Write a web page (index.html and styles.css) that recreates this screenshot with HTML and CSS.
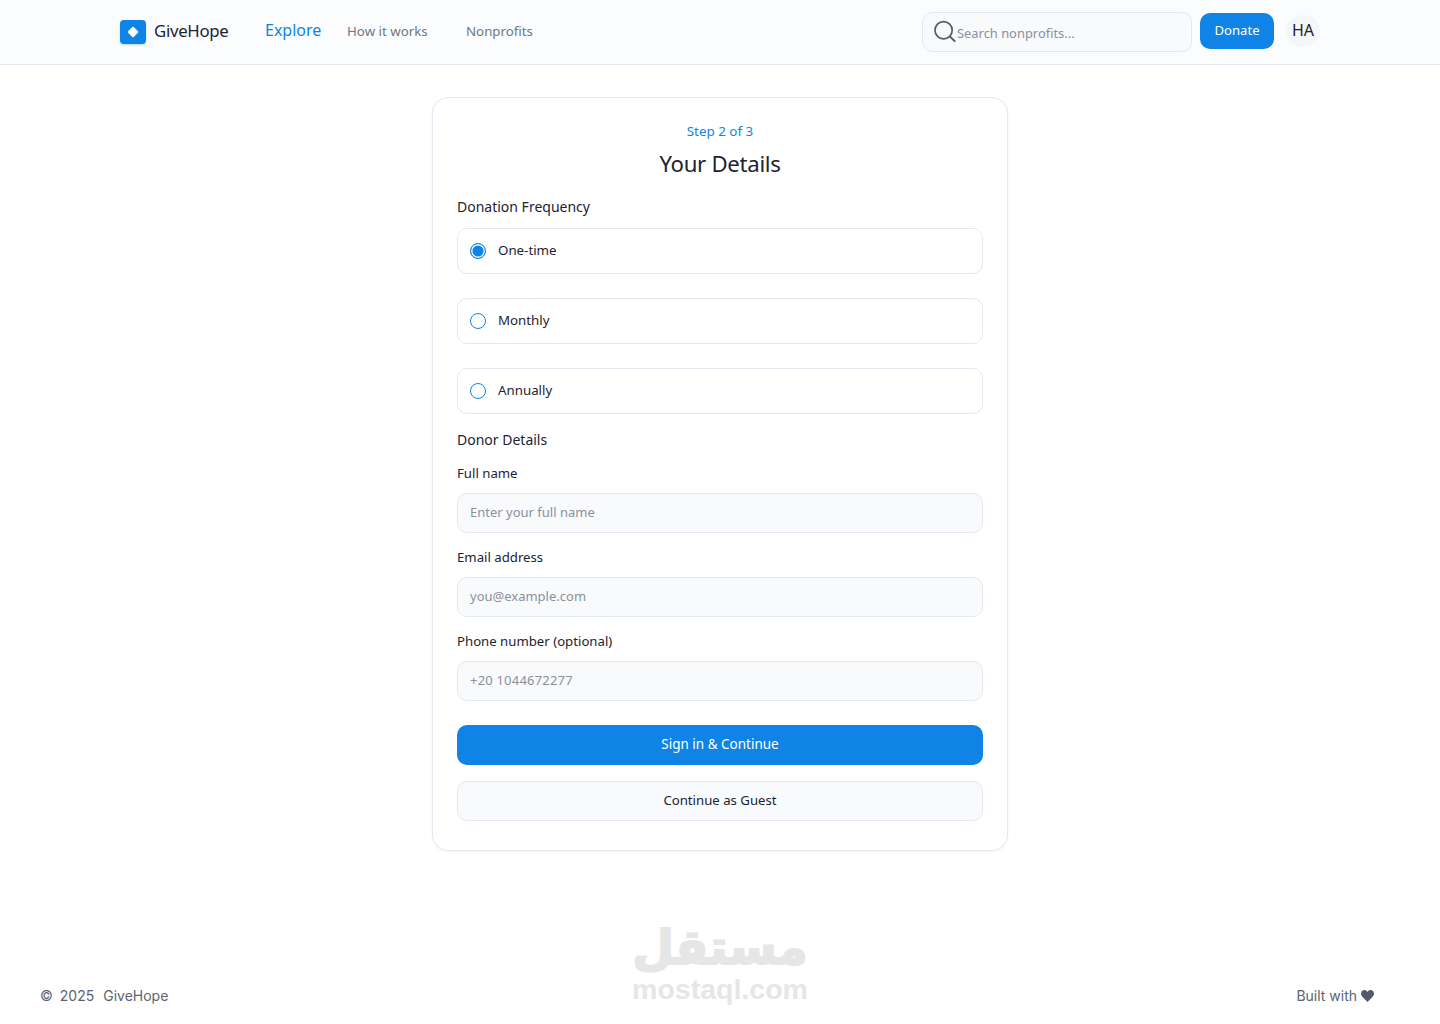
FILE: index.html
```html
<!DOCTYPE html>
<html>
<head>
    <meta charset="utf-8" />
    <meta name="viewport" content="width=device-width, initial-scale=1.0">
    <title>GiveHope - Your Details</title>
    <link rel="stylesheet" href="styles.css">
</head>
<body>
    <div class="header">
        <div class="brand">
            <span class="logo"><span class="logo-mark"></span></span>
            <span class="brand-name">GiveHope</span>
        </div>
        <a class="nav-active">Explore</a>
        <a class="nav-link nav-how">How it works</a>
        <a class="nav-link">Nonprofits</a>
        <div class="header-right">
            <div class="search">
                <svg class="search-icon" width="24" height="24" viewBox="0 0 24 24" fill="none" stroke="#535b68" stroke-width="1.7" stroke-linecap="round"><circle cx="10.600" cy="10.200" r="8.600"/><path d="M17 16.600l4.600 4.400" stroke-width="2"/></svg>
                <span class="search-text">Search nonprofits...</span>
            </div>
            <button class="donate-btn">Donate</button>
            <div class="avatar">HA</div>
        </div>
    </div>

    <div class="main">
        <div class="card">
            <p class="step">Step 2 of 3</p>
            <h1>Your Details</h1>

            <p class="section-label">Donation Frequency</p>
            <div class="options">
                <label class="option"><span class="radio radio-on"></span><span class="option-text">One-time</span></label>
                <label class="option"><span class="radio"></span><span class="option-text">Monthly</span></label>
                <label class="option"><span class="radio"></span><span class="option-text">Annually</span></label>
            </div>

            <p class="section-label donor-label">Donor Details</p>
            <div class="field">
                <label>Full name</label>
                <div class="input">Enter your full name</div>
            </div>
            <div class="field">
                <label>Email address</label>
                <div class="input">you@example.com</div>
            </div>
            <div class="field">
                <label>Phone number (optional)</label>
                <div class="input input-phone">+20 1044672277</div>
            </div>

            <button class="btn-primary">Sign in &amp; Continue</button>
            <button class="btn-secondary">Continue as Guest</button>
        </div>
    </div>

    <div class="footer">
        <span class="copy"><span>©</span><span>2025</span><span class="copy-name">GiveHope</span></span>
        <span class="built">Built with
            <svg width="13" height="12" viewBox="0 0 14 12" preserveAspectRatio="none" fill="#535b68"><path d="M7 12L1.200 6.400C-.4 4.700-.3 2.300 1.100 1 2.600-.4 5.400-.3 7 1.900 8.600-.3 11.400-.4 12.900 1c1.400 1.300 1.500 3.700-.1 5.400z"/></svg>
        </span>
    </div>

    <div class="watermark">
        <div class="wm-ar" lang="ar" dir="rtl">مستقل</div>
        <div class="wm-en">mostaql.com</div>
    </div>
</body>
</html>
```

FILE: styles.css
```css
* {
    box-sizing: border-box;
}

body {
    font-family: "Noto Sans", "Open Sans", sans-serif;
    margin: 0;
    padding: 0;
    background-color: white;
    color: #1c2333;
    height: 1024px;
    position: relative;
    overflow: hidden;
    display: flex;
    flex-direction: column;
}

.header {
    height: 65px;
    display: flex;
    align-items: center;
    padding: 0 120px;
    background-color: #fbfcfd;
    border-bottom: 1px solid #e3e8f0;
}

.brand {
    display: flex;
    align-items: center;
    gap: 8px;
    width: 145px;
}

.logo {
    width: 26px;
    height: 24px;
    border-radius: 4px;
    background-color: #0f84e6;
    box-shadow: 0 1px 2px rgba(15, 132, 230, 0.3);
    display: flex;
    align-items: center;
    justify-content: center;
}

.logo-mark {
    width: 8px;
    height: 8px;
    border-radius: 1px;
    background-color: white;
    transform: rotate(45deg);
}

.brand-name {
    font-size: 16.800px;
    letter-spacing: -0.3px;
    color: #1c2333;
    padding-bottom: 3px;
}

.nav-active {
    font-size: 16px;
    color: #0f84e6;
    width: 82px;
    padding-bottom: 5px;
}

.nav-link {
    font-size: 13.300px;
    color: #6f7683;
    padding-bottom: 3px;
}

.nav-how {
    width: 119px;
}

.header-right {
    margin-left: auto;
    display: flex;
    align-items: center;
}

.search {
    width: 270px;
    height: 40px;
    display: flex;
    align-items: center;
    padding-left: 10px;
    border: 1px solid #e3e8f0;
    border-radius: 10px;
    background-color: #f8fafc;
    font-size: 12.900px;
    color: #8b919c;
}

.search-icon {
    flex-shrink: 0;
}

.search-text {
    padding-top: 2px;
}

.donate-btn {
    font-family: inherit;
    font-size: 13.100px;
    color: white;
    background-color: #0f84e6;
    border: 0;
    border-radius: 10px;
    width: 74px;
    height: 36px;
    margin-left: 8px;
    margin-top: -2px;
    padding: 0 0 3px;
}

.avatar {
    width: 34px;
    height: 32px;
    margin-left: 12px;
    margin-top: -2px;
    padding-bottom: 3px;
    border-radius: 50%;
    background-color: #f4f6f9;
    display: flex;
    align-items: center;
    justify-content: center;
    font-size: 16px;
    color: #1c2333;
}

.main {
    flex: 1;
    display: flex;
    justify-content: center;
    padding-top: 32px;
}

.card {
    width: 576px;
    height: 754px;
    padding: 24px;
    border: 1px solid #e3e8f0;
    border-radius: 16px;
    background-color: white;
    box-shadow: 0 1px 2px rgba(30, 50, 90, 0.05);
}

.step {
    margin: 0;
    text-align: center;
    font-size: 13.400px;
    line-height: 19px;
    color: #0f84e6;
}

h1 {
    margin: 5px 0 0;
    text-align: center;
    font-size: 22.200px;
    line-height: 36px;
    font-weight: 400;
    letter-spacing: -0.3px;
}

.section-label {
    margin: 15px 0 0;
    font-size: 14px;
    line-height: 20px;
}

.options {
    margin-top: 11px;
    display: flex;
    flex-direction: column;
    gap: 24px;
}

.option {
    height: 46px;
    display: flex;
    align-items: center;
    gap: 12px;
    padding-left: 12px;
    border: 1px solid #e3e8f0;
    border-radius: 10px;
    font-size: 13.300px;
}

.option-text {
    padding-bottom: 2px;
}

.radio {
    width: 16px;
    height: 16px;
    border: 1.300px solid #0f84e6;
    border-radius: 50%;
    background-color: white;
    flex-shrink: 0;
}

.radio-on {
    background-color: #0f84e6;
    box-shadow: inset 0 0 0 1.400px white;
}

.donor-label {
    margin-top: 16px;
}

.field {
    margin-top: 13px;
}

.field + .field {
    margin-top: 14px;
}

.field label {
    display: block;
    font-size: 13.200px;
    line-height: 20px;
    margin-bottom: 10px;
}

.input {
    height: 40px;
    display: flex;
    align-items: center;
    padding: 0 0 2px 12px;
    border: 1px solid #e3e8f0;
    border-radius: 10px;
    background-color: #f8fafc;
    font-size: 13px;
    color: #8b919c;
}

.input-phone {
    letter-spacing: 0.2px;
}

.btn-primary,
.btn-secondary {
    display: block;
    width: 100%;
    height: 40px;
    font-family: inherit;
    font-size: 13.500px;
    border-radius: 10px;
    padding: 0 0 2px;
}

.btn-primary {
    margin-top: 24px;
    border: 0;
    background-color: #0f84e6;
    color: white;
}

.btn-secondary {
    margin-top: 16px;
    border: 1px solid #e3e8f0;
    background-color: #f8fafc;
    color: #1c2333;
    font-size: 13.200px;
}

.footer {
    height: 57px;
    display: flex;
    align-items: center;
    justify-content: space-between;
    padding: 0 66px 0 40px;
    font-family: Inter, sans-serif;
    font-size: 14px;
    color: #5c6472;
}

.copy {
    display: flex;
    gap: 7px;
}

.copy-name {
    margin-left: 2px;
}

.built svg {
    vertical-align: -1px;
}

.watermark {
    position: absolute;
    left: 600px;
    top: 919px;
    width: 240px;
    text-align: center;
    color: #e6e6e6;
    font-weight: 700;
}

.wm-ar {
    font-family: "DejaVu Sans", sans-serif;
    font-size: 48px;
    line-height: 56px;
    -webkit-text-stroke: 2px #e6e6e6;
}

.wm-en {
    font-family: "Liberation Sans", sans-serif;
    font-size: 28.500px;
    line-height: 30px;
    margin-top: -1px;
}
```
